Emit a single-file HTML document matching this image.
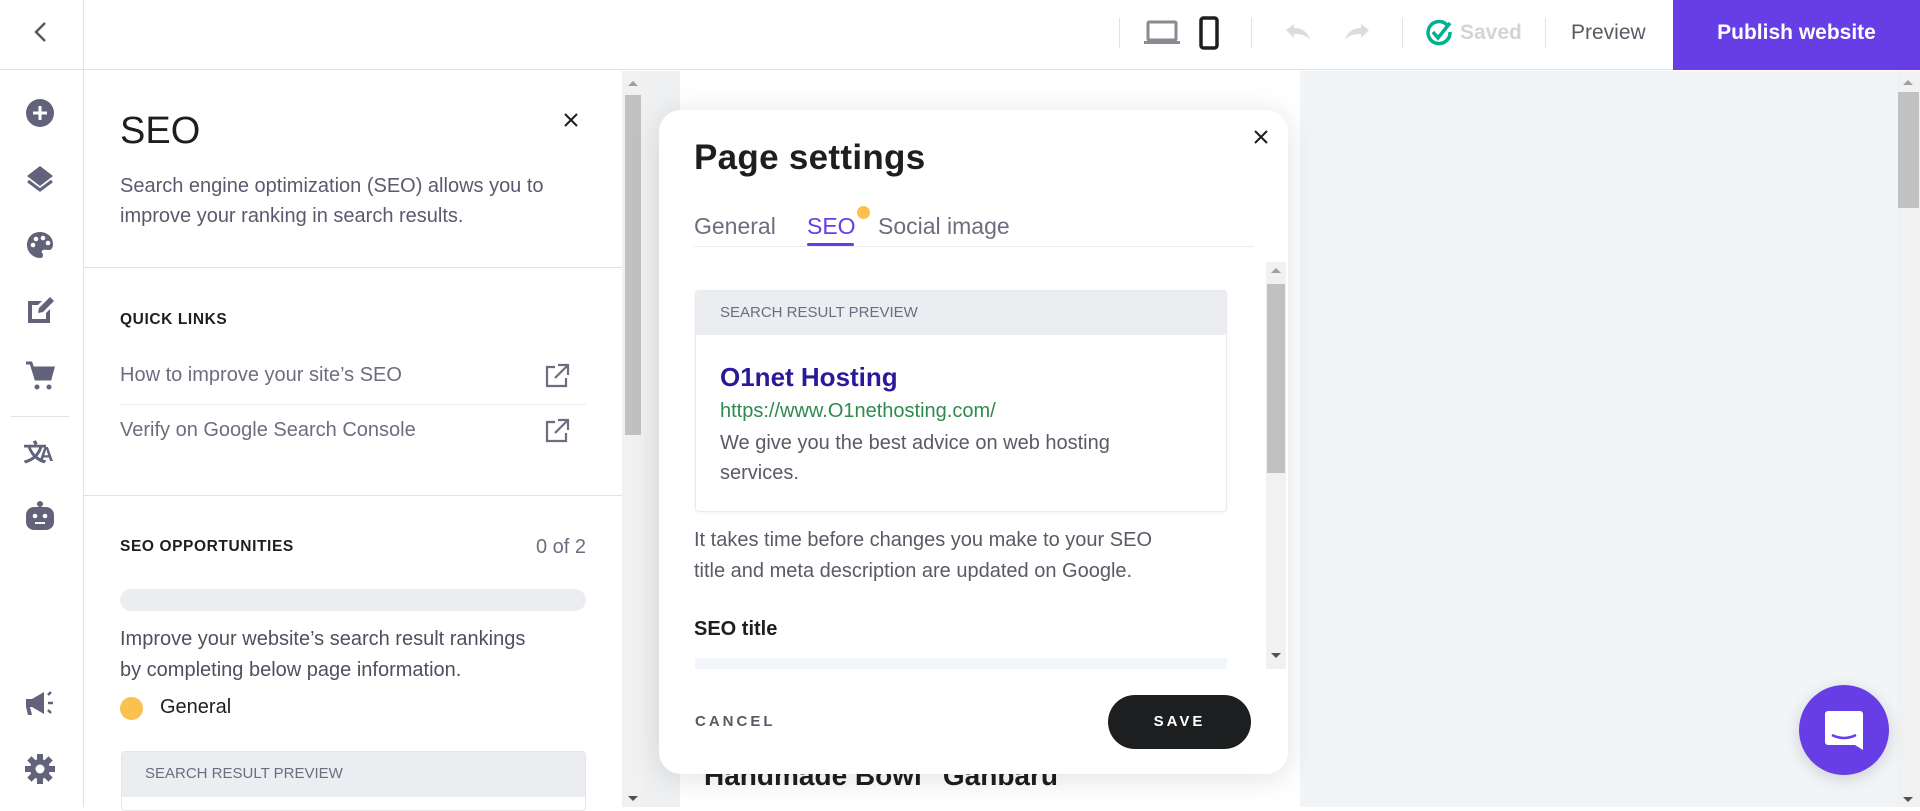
<!DOCTYPE html>
<html><head><meta charset="utf-8"><style>
*{margin:0;padding:0;box-sizing:border-box}
body{width:1920px;height:807px;overflow:hidden;background:#fff;font-family:"Liberation Sans",sans-serif;position:relative;color:#1d1e20}
.a{position:absolute}
.ic{fill:#62627a}
.t{white-space:nowrap}
</style></head><body>
<!-- top bar -->
<div class="a" style="left:0;top:0;width:1920px;height:70px;border-bottom:1px solid #e2e2e6;background:#fff"></div>
<div class="a" style="left:83px;top:0;width:1px;height:807px;background:#e2e2e6"></div>
<svg class="a" style="left:30px;top:20px" width="22" height="24" viewBox="0 0 22 24"><path d="M15 3 L6 12 L15 21" stroke="#555" stroke-width="2.4" fill="none"/></svg>
<div class="a" style="left:1119px;top:18px;width:1px;height:30px;background:#e2e2e6"></div>
<div class="a" style="left:1251px;top:18px;width:1px;height:30px;background:#e2e2e6"></div>
<div class="a" style="left:1402px;top:18px;width:1px;height:30px;background:#e2e2e6"></div>
<div class="a" style="left:1545px;top:18px;width:1px;height:30px;background:#e2e2e6"></div>
<svg class="a" style="left:1143px;top:20px" width="38" height="26" viewBox="0 0 38 26"><rect x="5" y="2" width="28" height="18" rx="1" fill="none" stroke="#8a8a90" stroke-width="3"/><rect x="1" y="21" width="36" height="3" fill="#8a8a90"/></svg>
<svg class="a" style="left:1199px;top:16px" width="20" height="34" viewBox="0 0 20 34"><rect x="2" y="2" width="16" height="30" rx="2.5" fill="none" stroke="#1d1e20" stroke-width="3.5"/></svg>
<svg class="a" style="left:1282px;top:22px" width="30" height="22" viewBox="0 0 30 22"><path d="M4 8 L12 2 L12 6 C20 6 26 10 28 18 C24 13 19 12 12 12 L12 16 Z" fill="#dcdce0"/></svg>
<svg class="a" style="left:1343px;top:22px" width="30" height="22" viewBox="0 0 30 22"><path d="M26 8 L18 2 L18 6 C10 6 4 10 2 18 C6 13 11 12 18 12 L18 16 Z" fill="#dcdce0"/></svg>
<svg class="a" style="left:1425px;top:19px" width="28" height="28" viewBox="0 0 28 28"><path d="M22 6 A11 11 0 1 0 25 13" stroke="#00b090" stroke-width="3.5" fill="none"/><path d="M8 13 L13 19 L25 4" stroke="#00b090" stroke-width="3.5" fill="none"/></svg>
<div class="a t" style="left:1460px;top:21px;font-size:21px;color:#d4d4d8;font-weight:bold">Saved</div>
<div class="a t" style="left:1571px;top:21px;font-size:21px;color:#5a5a66">Preview</div>
<div class="a" style="left:1673px;top:0;width:247px;height:70px;background:#673de6"></div>
<div class="a t" style="left:1673px;top:21px;width:247px;text-align:center;font-size:21px;color:#fff;font-weight:bold">Publish website</div>

<!-- left rail icons -->
<svg class="a" style="left:26px;top:99px" width="28" height="28" viewBox="0 0 28 28"><circle cx="14" cy="14" r="14" class="ic"/><path d="M14 7V21M7 14H21" stroke="#fff" stroke-width="3"/></svg>
<svg class="a" style="left:25px;top:164px" width="30" height="30" viewBox="0 0 30 30"><path d="M15 2 L28 12 L15 22 L2 12Z" class="ic"/><path d="M3 17 L15 26 L27 17" stroke="#62627a" stroke-width="3" fill="none"/></svg>
<svg class="a" style="left:26px;top:231px" width="28" height="28" viewBox="0 0 28 28"><path d="M14 1C6 1 1 7 1 14c0 7 6 13 13 13 2 0 3-1 3-3 0-2-2-2-1-4 1-2 4-1 7-1 3 0 4-3 4-6C27 6 21 1 14 1z" class="ic"/><circle cx="7" cy="14" r="2.3" fill="#fff"/><circle cx="10" cy="8" r="2.3" fill="#fff"/><circle cx="17" cy="7" r="2.3" fill="#fff"/><circle cx="22" cy="12" r="2.3" fill="#fff"/></svg>
<svg class="a" style="left:26px;top:295px" width="30" height="30" viewBox="0 0 30 30"><path d="M2 6h14l-4 4H6v14h14v-6l4-4v14H2z" class="ic"/><path d="M12 18 L13 13 L24 2 L28 6 L17 17 Z" class="ic"/></svg>
<svg class="a" style="left:25px;top:361px" width="30" height="30" viewBox="0 0 30 30"><path d="M1 2h5l5 16h14l3-11H8" stroke="#62627a" stroke-width="3" fill="none"/><path d="M9 7h18l-3 10H12z" class="ic"/><circle cx="12" cy="26" r="2.5" class="ic"/><circle cx="24" cy="26" r="2.5" class="ic"/></svg>
<div class="a" style="left:11px;top:416px;width:58px;height:1px;background:#e2e2e6"></div>
<div class="a t" style="left:23px;top:433px;font-size:24px;color:#62627a;font-family:'Noto Sans CJK SC',sans-serif;font-weight:bold">文<span style="font-family:'Liberation Sans';font-size:20px;margin-left:-8px">A</span></div>
<svg class="a" style="left:24px;top:500px" width="32" height="32" viewBox="0 0 32 32"><circle cx="16" cy="4" r="3" class="ic"/><rect x="2" y="7" width="28" height="23" rx="8" class="ic"/><circle cx="11" cy="16" r="2.3" fill="#fff"/><circle cx="21" cy="16" r="2.3" fill="#fff"/><rect x="11" y="22" width="10" height="2" fill="#fff"/></svg>
<svg class="a" style="left:24px;top:690px" width="32" height="28" viewBox="0 0 32 28"><path d="M2 9h6l12-7v22L8 17H6l2 8H4l-2-8z" class="ic"/><path d="M24 5l3-3M24 13h5M24 20l3 3" stroke="#62627a" stroke-width="2.5"/></svg>
<svg class="a" style="left:25px;top:754px" width="30" height="30" viewBox="0 0 30 30"><g class="ic"><circle cx="15" cy="15" r="10"/><rect x="12" y="0" width="6" height="30"/><rect x="0" y="12" width="30" height="6"/><rect x="12" y="0" width="6" height="30" transform="rotate(45 15 15)"/><rect x="12" y="0" width="6" height="30" transform="rotate(-45 15 15)"/></g><circle cx="15" cy="15" r="4.5" fill="#fff"/></svg>

<!-- left panel -->
<div class="a t" style="left:120px;top:110px;font-size:38px;color:#1d1e20">SEO</div>
<svg class="a" style="left:563px;top:112px" width="16" height="16" viewBox="0 0 16 16"><path d="M2 2L14 14M14 2L2 14" stroke="#1d1e20" stroke-width="2"/></svg>
<div class="a" style="left:120px;top:171px;font-size:20px;line-height:30px;color:#5a5a6e;width:480px">Search engine optimization (SEO) allows you to improve your ranking in search results.</div>
<div class="a" style="left:84px;top:267px;width:538px;height:1px;background:#e2e2e6"></div>
<div class="a t" style="left:120px;top:311px;font-size:15.5px;font-weight:bold;letter-spacing:0.6px;color:#1d1e20">QUICK LINKS</div>
<div class="a t" style="left:120px;top:364px;font-size:20px;color:#6d6d80">How to improve your site’s SEO</div>
<div class="a" style="left:120px;top:404px;width:466px;height:1px;background:#ececf0"></div>
<div class="a t" style="left:120px;top:419px;font-size:20px;color:#6d6d80">Verify on Google Search Console</div>
<svg class="a" style="left:544px;top:363px" width="26" height="26" viewBox="0 0 26 26"><path d="M11 4H3v19h19v-8M14 2h10v10M24 2L11 15" stroke="#6d6d80" stroke-width="2.2" fill="none"/></svg>
<svg class="a" style="left:544px;top:418px" width="26" height="26" viewBox="0 0 26 26"><path d="M11 4H3v19h19v-8M14 2h10v10M24 2L11 15" stroke="#6d6d80" stroke-width="2.2" fill="none"/></svg>
<div class="a" style="left:84px;top:495px;width:538px;height:1px;background:#e2e2e6"></div>
<div class="a t" style="left:120px;top:538px;font-size:15.5px;font-weight:bold;letter-spacing:0.6px">SEO OPPORTUNITIES</div>
<div class="a t" style="left:500px;top:536px;width:86px;text-align:right;font-size:20px;color:#6d6d80">0 of 2</div>
<div class="a" style="left:120px;top:589px;width:466px;height:22px;border-radius:11px;background:#ebedf0"></div>
<div class="a" style="left:120px;top:624px;font-size:20px;line-height:31px;color:#4f4f60;width:422px">Improve your website’s search result rankings by completing below page information.</div>
<div class="a" style="left:120px;top:697px;width:23px;height:23px;border-radius:50%;background:#fbc04e"></div>
<div class="a t" style="left:160px;top:696px;font-size:20px;color:#1d1e20">General</div>
<div class="a" style="left:121px;top:751px;width:465px;height:60px;border:1px solid #e4e6ea;border-radius:4px;background:#fff"></div>
<div class="a" style="left:122px;top:752px;width:463px;height:45px;background:#ebedf0"></div>
<div class="a t" style="left:145px;top:765px;font-size:15px;color:#6d6d80">SEARCH RESULT PREVIEW</div>
<!-- left scrollbar -->
<div class="a" style="left:622px;top:71px;width:22px;height:736px;background:#f1f1f1"></div>
<div class="a" style="left:625px;top:95px;width:16px;height:340px;background:#c1c1c1"></div>
<div class="a" style="left:628px;top:81px;border:5px solid transparent;border-bottom-color:#a0a0a0;border-top:0"></div>
<div class="a" style="left:628px;top:796px;border:5px solid transparent;border-top-color:#505050;border-bottom:0"></div>

<!-- canvas -->
<div class="a" style="left:644px;top:71px;width:36px;height:736px;background:#eff0f1"></div>
<div class="a" style="left:680px;top:71px;width:620px;height:736px;background:#fff"></div>
<div class="a" style="left:1300px;top:71px;width:597px;height:736px;background:#f2f5f8"></div>
<div class="a t" style="left:704px;top:760px;font-size:28px;font-weight:bold;color:#1d1e20">Handmade Bowl "Ganbaru"</div>
<!-- right scrollbar -->
<div class="a" style="left:1897px;top:71px;width:23px;height:736px;background:#f1f1f1"></div>
<div class="a" style="left:1898px;top:92px;width:21px;height:116px;background:#c1c1c1"></div>
<div class="a" style="left:1903px;top:80px;border:5px solid transparent;border-bottom-color:#a0a0a0;border-top:0"></div>
<div class="a" style="left:1903px;top:797px;border:5px solid transparent;border-top-color:#505050;border-bottom:0"></div>

<!-- modal -->
<div class="a" style="left:659px;top:110px;width:629px;height:664px;background:#fff;border-radius:22px;box-shadow:0 4px 30px rgba(0,0,0,0.12)"></div>
<div class="a t" style="left:694px;top:138px;font-size:35px;font-weight:bold;color:#1d1e20;letter-spacing:0.3px">Page settings</div>
<svg class="a" style="left:1254px;top:130px" width="14" height="14" viewBox="0 0 14 14"><path d="M1 1L13 13M13 1L1 13" stroke="#1d1e20" stroke-width="2"/></svg>
<div class="a t" style="left:694px;top:213px;font-size:23px;color:#6d6d80">General</div>
<div class="a t" style="left:807px;top:213px;font-size:23px;color:#673de6">SEO</div>
<div class="a" style="left:807px;top:243px;width:47px;height:3px;background:#673de6;border-radius:2px"></div>
<div class="a" style="left:857px;top:206px;width:13px;height:13px;border-radius:50%;background:#fbc04e"></div>
<div class="a t" style="left:878px;top:213px;font-size:23px;color:#6d6d80">Social image</div>
<div class="a" style="left:694px;top:246px;width:560px;height:1px;background:#eeeef2"></div>
<!-- inner scroll -->
<div class="a" style="left:1266px;top:262px;width:20px;height:407px;background:#f1f1f1"></div>
<div class="a" style="left:1267px;top:284px;width:18px;height:189px;background:#c1c1c1"></div>
<div class="a" style="left:1271px;top:268px;border:5px solid transparent;border-bottom-color:#a0a0a0;border-top:0"></div>
<div class="a" style="left:1271px;top:653px;border:5px solid transparent;border-top-color:#505050;border-bottom:0"></div>
<div class="a" style="left:695px;top:290px;width:532px;height:222px;border:1px solid #e8eaee;border-radius:4px;box-shadow:0 1px 3px rgba(0,0,0,0.05)"></div>
<div class="a" style="left:696px;top:291px;width:530px;height:44px;background:#ebedf0"></div>
<div class="a t" style="left:720px;top:304px;font-size:15px;color:#6d6d80">SEARCH RESULT PREVIEW</div>
<div class="a t" style="left:720px;top:362px;font-size:26px;font-weight:bold;color:#2a1a9a">O1net Hosting</div>
<div class="a t" style="left:720px;top:400px;font-size:20px;color:#2e8a4e">https://www.O1nethosting.com/</div>
<div class="a" style="left:720px;top:428px;font-size:20px;line-height:30px;color:#5a5a66;width:440px">We give you the best advice on web hosting services.</div>
<div class="a" style="left:694px;top:525px;font-size:20px;line-height:31px;color:#5a5a66;width:490px">It takes time before changes you make to your SEO title and meta description are updated on Google.</div>
<div class="a t" style="left:694px;top:618px;font-size:20px;font-weight:bold;color:#1d1e20">SEO title</div>
<div class="a" style="left:695px;top:658px;width:532px;height:11px;background:#f2f6fb"></div>
<!-- footer -->
<div class="a t" style="left:695px;top:713px;font-size:15px;font-weight:bold;letter-spacing:3px;color:#5a5a66">CANCEL</div>
<div class="a" style="left:1108px;top:695px;width:143px;height:54px;border-radius:27px;background:#1d1e20"></div>
<div class="a t" style="left:1108px;top:713px;width:143px;text-align:center;font-size:15px;font-weight:bold;letter-spacing:3px;color:#fff">SAVE</div>

<!-- chat -->
<div class="a" style="left:1799px;top:685px;width:90px;height:90px;border-radius:50%;background:#673de6;box-shadow:0 4px 16px rgba(0,0,0,0.15)"></div>
<svg class="a" style="left:1823px;top:709px" width="42" height="42" viewBox="0 0 42 42"><path d="M5 2h32a3 3 0 0 1 3 3v36l-8-5H5a3 3 0 0 1-3-3V5a3 3 0 0 1 3-3z" fill="#fff"/><path d="M9 26 Q21 32 33 26" stroke="#673de6" stroke-width="2.5" fill="none"/></svg>
</body></html>
